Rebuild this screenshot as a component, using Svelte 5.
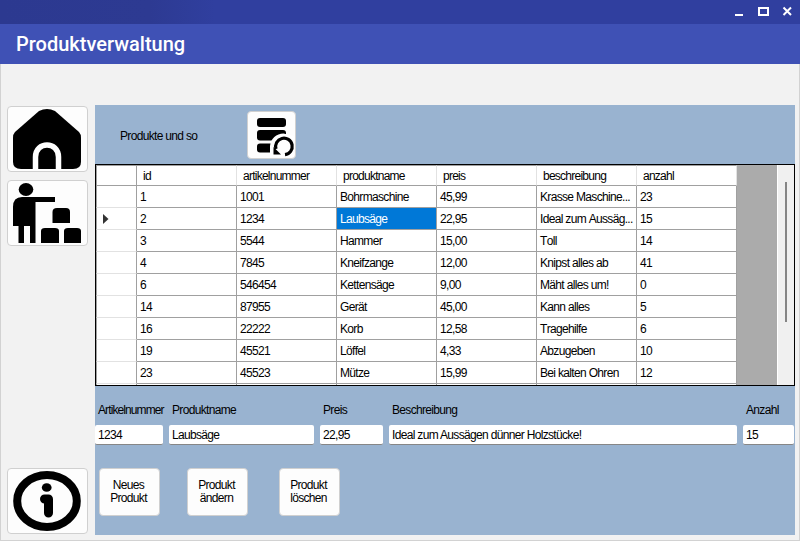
<script>
  const columns = ['id', 'artikelnummer', 'produktname', 'preis', 'beschreibung', 'anzahl'];
  const rows = [
    ['1', '1001', 'Bohrmaschine', '45,99', 'Krasse Maschine...', '23'],
    ['2', '1234', 'Laubsäge', '22,95', 'Ideal zum Aussäg...', '15'],
    ['3', '5544', 'Hammer', '15,00', 'Toll', '14'],
    ['4', '7845', 'Kneifzange', '12,00', 'Knipst alles ab', '41'],
    ['6', '546454', 'Kettensäge', '9,00', 'Mäht alles um!', '0'],
    ['14', '87955', 'Gerät', '45,00', 'Kann alles', '5'],
    ['16', '22222', 'Korb', '12,58', 'Tragehilfe', '6'],
    ['19', '45521', 'Löffel', '4,33', 'Abzugeben', '10'],
    ['23', '45523', 'Mütze', '15,99', 'Bei kalten Ohren', '12']
  ];
  const fields = [
    { label: 'Artikelnummer', value: '1234', kind: 'number' },
    { label: 'Produktname', value: 'Laubsäge', kind: 'name' },
    { label: 'Preis', value: '22,95', kind: 'price' },
    { label: 'Beschreibung', value: 'Ideal zum Aussägen dünner Holzstücke!', kind: 'description' },
    { label: 'Anzahl', value: '15', kind: 'amount' }
  ];
  const actions = [['Neues', 'Produkt'], ['Produkt', 'ändern'], ['Produkt', 'löschen']];
  let selected = $state(1);
</script>

<div class="window">
  <div class="status">
    <svg width="70" height="24" viewBox="0 0 70 24" fill="none" stroke="#fff" stroke-width="2">
      <path d="M5 15H13" />
      <path d="M29 8H38V15H29Z" />
      <path d="M53.5 7.5L61 15M61 7.5L53.5 15" />
    </svg>
  </div>
  <header>Produktverwaltung</header>
  <div class="body">
    <nav>
      <button class="tile" aria-label="Start">
        <svg width="79" height="64" viewBox="0 0 79 64">
          <path d="M31 4Q39 0 47 4L71 25Q73 27 73 31V55Q73 62 65 62H13Q5 62 5 55V31Q5 27 7 25Z" />
          <path d="M27.500 62V50C27.500 34 50.500 34 50.500 50V62" fill="none" stroke="#fff" stroke-width="5.500" />
        </svg>
      </button>
      <button class="tile" aria-label="Produkte">
        <svg width="79" height="64" viewBox="0 0 79 64">
          <ellipse cx="18" cy="8.500" rx="7.300" ry="6.500" />
          <path d="M5 45V26Q5 16 14 16H47V21H27.500V62H22V45H16V62H10.500V45Z" />
          <path d="M44.500 42V31Q44.500 27 49 27H58Q62 27 62 31V42ZM33 62V50Q33 47 37 47H47Q51 47 51 50V62ZM56 62V50Q56 47 60 47H69Q73 47 73 50V62Z" />
        </svg>
      </button>
      <button class="tile info" aria-label="Info">
        <svg width="79" height="64" viewBox="0 0 79 64">
          <ellipse cx="39" cy="32" rx="29.800" ry="26" fill="none" stroke="#000" stroke-width="8" />
          <ellipse cx="38.700" cy="18.500" rx="4.900" ry="4.300" />
          <path d="M36.500 30H40.500V44" fill="none" stroke="#000" stroke-width="9" stroke-linecap="round" stroke-linejoin="round" />
        </svg>
      </button>
    </nav>
    <main>
      <div class="top">
        <span class="caption">Produkte und so</span>
        <button class="refresh" aria-label="Aktualisieren">
          <svg width="47" height="46" viewBox="0 0 47 46">
            <rect x="9" y="6" width="29" height="9" rx="3" />
            <rect x="9" y="18" width="29" height="10.500" rx="3" />
            <rect x="9" y="31.500" width="29" height="9" rx="3" />
            <path d="M22 45V34A13.500 13.500 0 0 1 35.500 21.500L46 24V45Z" fill="#fff" />
            <path d="M28 37A8.300 8.300 0 1 1 37 42.700" fill="none" stroke="#000" stroke-width="3.200" />
            <path d="M25.500 35L33 42.500H25.500Z" />
          </svg>
        </button>
      </div>
      <div class="grid">
        <div class="table">
          <div class="row head">
            <div class="marker"></div>
            {#each columns as column}<div class="cell">{column}</div>{/each}
          </div>
          {#each rows as row, r}
            <div class="row">
              <div class="marker">
                {#if r === selected}<svg width="6" height="10" viewBox="0 0 6 10"><path d="M0 0L5.500 5L0 10Z" fill="#333" /></svg>{/if}
              </div>
              {#each row as text, c}
                <div class="cell" class:selected={r === selected && c === 2}>{text}</div>
              {/each}
            </div>
          {/each}
          <div class="row"><div class="marker"></div>{#each columns as _}<div class="cell"></div>{/each}</div>
        </div>
        <div class="scroll"><div class="thumb"></div></div>
      </div>
      <div class="form">
        {#each fields as field}
          <div class="field {field.kind}">
            <span class="label">{field.label}</span>
            <div class="input">{field.value}</div>
          </div>
        {/each}
      </div>
      <div class="actions">
        {#each actions as lines}
          <button>{lines[0]}<br />{lines[1]}</button>
        {/each}
      </div>
    </main>
  </div>
</div>

<style>
  .window {
    width: 800px;
    height: 541px;
    overflow: hidden;
    box-sizing: border-box;
    display: flex;
    flex-direction: column;
    background: #f2f2f2;
    color: #000;
    font: 12px/14px 'Liberation Sans', Arial, sans-serif;
    letter-spacing: -0.67px;
  }
  .window :global(*) { box-sizing: border-box; }
  svg { display: block; flex: none; }
  .status {
    height: 24px;
    flex: none;
    display: flex;
    justify-content: flex-end;
    background: linear-gradient(90deg, #2c3990 0, #2d3a92 150px, #303f9f 215px);
  }
  header {
    height: 40px;
    flex: none;
    padding-left: 16px;
    background: #3f51b5;
    color: #fff;
    font: 500 20px/40px Roboto, sans-serif;
    letter-spacing: 0;
  }
  .body {
    flex: 1;
    display: flex;
    padding: 41px 4px 5px 6px;
    border: 1px solid #d2d2d2;
    border-top: 0;
  }
  nav { width: 88px; display: flex; flex-direction: column; gap: 8px; padding-top: 1px; }
  button {
    margin: 0;
    padding: 0;
    border: 1px solid #d0d0d0;
    border-radius: 4px;
    background: #fdfdfd;
    color: #000;
    font: inherit;
    letter-spacing: inherit;
  }
  .tile { width: 81px; height: 66px; flex: none; }
  .info { margin-top: auto; margin-bottom: 1px; }
  main { width: 700px; height: 430px; flex: none; background: #99b3d0; display: flex; flex-direction: column; }
  .top { height: 59px; flex: none; display: flex; align-items: flex-start; padding: 6px 0 0 25px; }
  .caption { width: 127px; padding-top: 18px; }
  .refresh { width: 49px; height: 48px; }
  .grid { height: 222px; flex: none; display: flex; justify-content: space-between; border: 1px solid #000; background: #ababab; overflow: hidden; }
  .table { width: 641px; }
  .row { display: flex; height: 22px; }
  .head { height: 21px; }
  .marker {
    width: 41px;
    padding-left: 6px;
    display: flex;
    align-items: center;
    background: #fff;
    border-right: 1px solid #a0a0a0;
    border-bottom: 1px solid #e2e2e2;
    border-left: 1px solid #a0a0a0;
  }
  .cell {
    width: 100px;
    padding: 4px 0 0 3px;
    white-space: nowrap;
    overflow: hidden;
    background: #fff;
    border-right: 1px solid #a0a0a0;
    border-bottom: 1px solid #a0a0a0;
  }
  .head .cell { padding: 3px 0 0 6px; border-right-color: #e2e2e2; letter-spacing: -0.75px; }
  .head .marker { border-bottom-color: #a0a0a0; }
  .head .cell, .head .marker { border-top: 1px solid #a0a0a0; }
  .head .cell, .cell { font-kerning: none; }
  .selected { background: #0078d7; color: #fff; }
  .scroll { width: 17px; padding: 17px 0 0 7px; background: #f0f0f0; border-left: 1px solid #fff; }
  .thumb { width: 2px; height: 140px; background: #858585; }
  .form { display: flex; gap: 6px; height: 82px; flex: none; padding-top: 16px; }
  .field { flex: none; }
  .label { display: block; height: 23px; padding: 1px 0 0 3px; white-space: nowrap; }
  .number .label { letter-spacing: -0.9px; }
  .input {
    height: 20px;
    padding: 3px 0 0 3px;
    background: #fff;
    border-bottom: 1px solid #868686;
    border-radius: 2px;
    white-space: nowrap;
  }
  .number { width: 68px; }
  .name { width: 145px; }
  .price { width: 63px; }
  .description { width: 348px; }
  .amount { width: 51px; }
  .actions { display: flex; padding-left: 4px; }
  .actions button { width: 61px; height: 48px; padding-right: 2px; line-height: 13px; text-align: center; }
  .actions button:nth-child(2) { margin-left: 27px; }
  .actions button:nth-child(3) { margin-left: 31px; }
</style>
